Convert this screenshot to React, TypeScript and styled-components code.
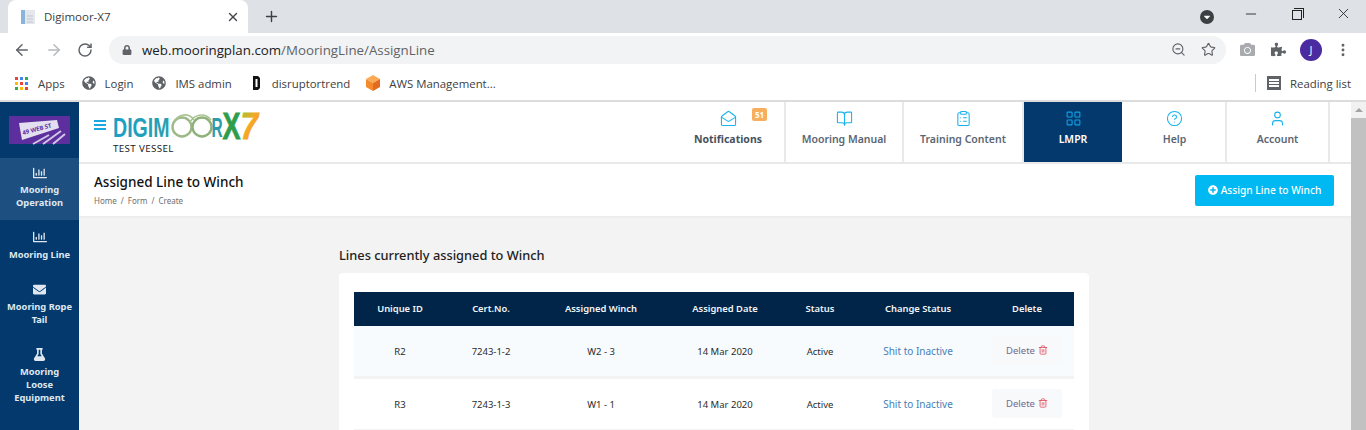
import { ReactNode } from 'react';
import styled, { createGlobalStyle } from 'styled-components';
import { ArrowLeft, ArrowRight, BookOpen, CircleHelp, ClipboardList, LayoutGrid, MailOpen, Minus, MoreVertical, Plus, RotateCw, Star, Trash2, User, X, ZoomOut } from 'lucide-react';
import { FaCamera, FaCaretDown, FaEnvelope, FaFlask, FaGlobeAmericas, FaLock, FaPlusCircle, FaPuzzlePiece, FaRegChartBar } from 'react-icons/fa';

const GlobalStyle = createGlobalStyle`
  html, body {
    margin: 0;
    height: 430px;
    overflow: hidden;
    background: #f3f3f3;
    font-family: "Noto Sans", "Open Sans", sans-serif;
  }
  * { box-sizing: border-box; }
`;

const Page = styled.div`
  width: 1366px;
  height: 430px;
  display: flex;
  flex-direction: column;
  overflow: hidden;
`;

const TabStrip = styled.div`
  height: 33px;
  flex: none;
  display: flex;
  align-items: flex-end;
  padding-left: 8px;
  background: #dee1e6;
`;

const Tab = styled.div`
  width: 240px;
  height: 33px;
  padding: 0 8px 0 12px;
  display: flex;
  align-items: center;
  background: #fff;
  border-radius: 8px 8px 0 0;
  font: 11.5px "Open Sans", sans-serif;
  color: #3c4043;
`;

const TabTitle = styled.span`
  flex: 1;
  margin-left: 8px;
`;

const NewTab = styled.div`
  width: 46px;
  display: flex;
  justify-content: center;
  align-self: center;
  color: #3c4043;
`;

const WindowControls = styled.div`
  margin-left: auto;
  align-self: stretch;
  display: flex;
  align-items: center;
  color: #222;
`;

const ProfileDrop = styled.span`
  width: 14px;
  height: 14px;
  margin-right: 14px;
  margin-top: 1px;
  display: flex;
  align-items: center;
  justify-content: center;
  border-radius: 50%;
  background: #3c4043;
  color: #fff;
`;

const WindowButton = styled.span`
  width: 46px;
  display: flex;
  justify-content: center;
  margin-top: -6px;
`;

const RestoreIcon = styled.span`
  position: relative;
  width: 10px;
  height: 10px;
  margin-top: 3px;
  border: 1px solid #222;
  &::after {
    content: '';
    position: absolute;
    left: 1px;
    top: -3px;
    width: 9px;
    height: 9px;
    border-top: 1px solid #222;
    border-right: 1px solid #222;
  }
`;

const Toolbar = styled.div`
  height: 33px;
  flex: none;
  display: flex;
  align-items: center;
  padding-left: 13px;
  background: #fff;
`;

const NavButton = styled.span<{ $faded?: boolean }>`
  width: 32px;
  display: flex;
  color: ${(p) => (p.$faded ? '#b6b9bd' : '#5f6368')};
`;

const Omnibox = styled.div`
  width: 1117px;
  height: 28px;
  padding: 0 10px 0 13px;
  display: flex;
  align-items: center;
  background: #f1f3f4;
  border-radius: 14px;
  font: 13.3px "Open Sans", sans-serif;
  color: #5f6368;
`;

const LockIcon = styled.span`
  display: flex;
  margin-right: 10px;
  color: #5f6368;
`;

const Host = styled.span`
  color: #202124;
`;

const OmniActions = styled.span`
  margin-left: auto;
  display: flex;
  align-items: center;
  gap: 15px;
  color: #5f6368;
`;

const Extensions = styled.div`
  display: flex;
  align-items: center;
  margin-left: 14px;
  gap: 16px;
  color: #5f6368;
`;

const Avatar = styled.span`
  width: 22px;
  height: 22px;
  margin-left: -2px;
  margin-right: -3px;
  display: flex;
  align-items: center;
  justify-content: center;
  border-radius: 50%;
  background: #4b2ca0;
  color: #fff;
  font: 11px "Open Sans", sans-serif;
`;

const BookmarksBar = styled.div`
  height: 34px;
  flex: none;
  display: flex;
  align-items: center;
  padding-left: 15px;
  background: #fff;
  font: 11.4px "Open Sans", sans-serif;
  color: #3c4043;
`;

const Bookmark = styled.span<{ $gap: number; $iconGap?: number }>`
  display: flex;
  align-items: center;
  gap: ${(p) => p.$iconGap ?? 9}px;
  margin-right: ${(p) => p.$gap}px;
`;

const AppsGrid = styled.span`
  width: 13px;
  display: grid;
  grid-template-columns: repeat(3, 3px);
  gap: 2px;
  margin-right: 2px;
`;

const AppsDot = styled.i<{ $color: string }>`
  height: 3px;
  background: ${(p) => p.$color};
`;

const ReadingList = styled.span`
  margin-left: auto;
  margin-right: 15px;
  height: 18px;
  padding-left: 11px;
  display: flex;
  align-items: center;
  gap: 9px;
  border-left: 1px solid #c8cacd;
`;

const ReadingIcon = styled.span`
  width: 14px;
  height: 14px;
  border: 2px solid #5f6368;
  background: repeating-linear-gradient(#5f6368 0 1px, #fff 1px 3px);
`;

const AppFrame = styled.div`
  flex: 1;
  min-height: 0;
  display: flex;
  border-top: 2px solid #dcdcdc;
`;

const Sidebar = styled.nav`
  width: 79px;
  flex: none;
  background: #03396c;
`;

const SideLogo = styled.div`
  height: 56px;
  display: flex;
  align-items: center;
  justify-content: center;
`;

const SideItem = styled.div<{ $active?: boolean; $height: number }>`
  height: ${(p) => p.$height}px;
  padding: ${(p) => (p.$active ? '8px' : '10px')} 7px 0;
  display: flex;
  flex-direction: column;
  align-items: center;
  gap: ${(p) => (p.$active ? 3 : 4)}px;
  background: ${(p) => (p.$active ? '#1d5080' : 'transparent')};
  color: #dfe8f1;
  font-size: 9.3px;
  font-weight: 700;
  line-height: 13px;
  text-align: center;
`;

const Main = styled.div`
  flex: 1;
  min-width: 0;
  display: flex;
  flex-direction: column;
`;

const TopBar = styled.header`
  height: 62px;
  flex: none;
  display: flex;
  background: #fff;
  border-bottom: 2px solid #e9e9e9;
`;

const Brand = styled.div`
  width: 602px;
  padding: 9px 0 0 15px;
  display: flex;
  gap: 6px;
`;

const Burger = styled.span`
  position: relative;
  width: 12px;
  height: 10px;
  margin-top: 9px;
  border-top: 2px solid #19a8e0;
  border-bottom: 2px solid #19a8e0;
  &::after {
    content: '';
    position: absolute;
    left: 0;
    right: 0;
    top: 2px;
    height: 2px;
    background: #19a8e0;
  }
`;

const LogoColumn = styled.div`
  display: flex;
  flex-direction: column;
`;

const LogoSvg = styled.svg`
  overflow: visible;
`;

const VesselName = styled.span`
  margin: 2px 0 0 1px;
  font-size: 9.8px;
  line-height: 12px;
  letter-spacing: 0.35px;
  color: #222;
`;

const NavItem = styled.div<{ $width: number; $active?: boolean; $strong?: boolean }>`
  position: relative;
  width: ${(p) => p.$width}px;
  flex: none;
  padding: 8px ${(p) => (p.$strong ? 9 : 0)}px 0 0;
  display: flex;
  flex-direction: column;
  align-items: center;
  gap: 5px;
  border-right: 2px solid ${(p) => (p.$active ? '#fff' : '#e9e9e9')};
  background: ${(p) => (p.$active ? '#03396c' : '#fff')};
  color: ${(p) => (p.$active ? '#fff' : p.$strong ? '#48525e' : '#5b6673')};
  font-size: 10.5px;
  font-weight: ${(p) => (p.$strong ? 700 : 600)};
  line-height: 15px;
`;

const NavIcon = styled.span<{ $active?: boolean }>`
  display: flex;
  color: ${(p) => (p.$active ? '#0fa3e8' : '#18b3ee')};
`;

const Badge = styled.span`
  position: absolute;
  top: 6px;
  right: 17px;
  width: 15px;
  height: 13px;
  display: flex;
  align-items: center;
  justify-content: center;
  border-radius: 2px;
  background: #f7ae5e;
  color: #fff;
  font-size: 8px;
  font-weight: 700;
`;

const FillBar = styled.div`
  flex: 1;
`;

const SubHeader = styled.div`
  height: 54px;
  flex: none;
  display: flex;
  align-items: center;
  justify-content: space-between;
  padding: 0 17px 0 15px;
  background: #fff;
  border-bottom: 2px solid #ededed;
`;

const TitleBlock = styled.div`
  padding-bottom: 2px;
`;

const PageTitle = styled.h1`
  margin: 0 0 4px;
  font-size: 13.5px;
  font-weight: 500;
  line-height: 18px;
  color: #111;
`;

const Crumbs = styled.div`
  display: flex;
  gap: 4px;
  font-size: 8px;
  line-height: 11px;
  color: #6e6e6e;
`;

const PrimaryButton = styled.button`
  width: 139px;
  height: 31px;
  display: flex;
  align-items: center;
  justify-content: center;
  gap: 3px;
  border: 0;
  border-radius: 2px;
  background: #00b9f2;
  color: #fff;
  font: 500 10.2px "Noto Sans", sans-serif;
`;

const Content = styled.section`
  flex: 1;
  padding: 27px 0 0 260px;
  background: #f3f3f3;
  overflow: hidden;
`;

const SectionTitle = styled.h2`
  margin: 0 0 8px;
  font-size: 12.8px;
  font-weight: 500;
  line-height: 20px;
  color: #222;
`;

const Card = styled.div`
  width: 750px;
  padding: 19px 15px 0;
  background: #fff;
  border-radius: 4px 4px 0 0;
`;

const Row = styled.div<{ $head?: boolean; $tint?: boolean }>`
  display: grid;
  grid-template-columns: 92px 90px 130px 118px 72px 124px 94px;
  align-items: center;
  justify-items: center;
  height: ${(p) => (p.$head ? 34 : 53)}px;
  padding-bottom: ${(p) => (p.$head ? 1 : 0)}px;
  border-bottom: ${(p) => (p.$head ? 'none' : '3px solid #f3f3f3')};
  background: ${(p) => (p.$head ? '#012548' : p.$tint ? '#f7fbfe' : '#fff')};
  color: ${(p) => (p.$head ? '#f3f6f9' : '#2b2b2b')};
  font-size: ${(p) => (p.$head ? 9.4 : 9.5)}px;
  font-weight: ${(p) => (p.$head ? 600 : 400)};
`;

const StatusLink = styled.span`
  font-size: 10px;
  color: #4681b8;
`;

const DeleteButton = styled.span`
  width: 70px;
  height: 29px;
  display: flex;
  align-items: center;
  justify-content: center;
  gap: 3px;
  margin-top: -2px;
  border-radius: 3px;
  background: #f8f9fb;
  color: #71688f;
`;

const TrashIcon = styled.span`
  display: flex;
  color: #e0525f;
`;

const Scrollbar = styled.div`
  width: 15px;
  flex: none;
  padding-top: 6px;
  display: flex;
  flex-direction: column;
  align-items: center;
  gap: 6px;
  background: #f1f1f1;
`;

const ScrollArrow = styled.span`
  width: 0;
  height: 0;
  border-left: 4px solid transparent;
  border-right: 4px solid transparent;
  border-bottom: 4px solid #a3a3a3;
`;

const ScrollThumb = styled.span`
  flex: 1;
  width: 100%;
  background: #c1c1c1;
`;

const FavIcon = () => (
  <svg width="16" height="16" viewBox="0 0 16 16">
    <rect x="1" y="1" width="5" height="14" fill="#8ab4dc" />
    <rect x="5" y="1" width="10" height="14" fill="#e4e7ec" />
    <path d="M7 7h6M7 10h6M7 13h6" stroke="#c2c7ce" />
  </svg>
);

const AwsCube = () => (
  <svg width="16" height="18" viewBox="0 0 16 18">
    <path d="M8 1l7 4-7 4-7-4z" fill="#fbab55" />
    <path d="M1 5l7 4v8l-7-4z" fill="#f58a2c" />
    <path d="M15 5l-7 4v8l7-4z" fill="#e36a1f" />
  </svg>
);

const StreetLogo = () => (
  <LogoSvg width="61" height="28" viewBox="0 0 61 28">
    <rect width="61" height="28" fill="#5d2f9e" />
    <path d="M10 7L48 4l2 8-37 12z" fill="#e4dff0" />
    <path d="M24 28l16-9M34 28l18-13M44 28l12-10" stroke="#cfc7e6" strokeWidth="2" />
    <text x="14" y="19" fontSize="6" fontWeight="700" fill="#5d2f9e" transform="rotate(-15 14 19)">
      49 WEB ST
    </text>
  </LogoSvg>
);

const DigimoorLogo = () => (
  <LogoSvg width="150" height="30" viewBox="0 0 150 30" fontFamily="'Liberation Sans', sans-serif" fontWeight="700">
    <defs>
      <linearGradient id="logoBlue" x1="0" x2="1" y1="0" y2="0">
        <stop offset="0" stopColor="#1b9fc8" />
        <stop offset="1" stopColor="#2a9fae" />
      </linearGradient>
      <linearGradient id="logoSeven" x1="0" x2="1" y1="0" y2="1">
        <stop offset="0" stopColor="#8cc63f" />
        <stop offset="0.5" stopColor="#f7a823" />
        <stop offset="1" stopColor="#f07f2a" />
      </linearGradient>
    </defs>
    <text transform="translate(1 26) scale(0.7 1)" fontSize="28" fill="url(#logoBlue)">
      DIGIM
    </text>
    <ellipse cx="70" cy="16" rx="9.5" ry="9.5" fill="none" stroke="#9db98a" strokeWidth="2.4" />
    <ellipse cx="90" cy="16" rx="9.5" ry="9.5" fill="none" stroke="#8fb27a" strokeWidth="2.4" />
    <path d="M62 10C70 1 78 3 82 9M78 11C84 2 94 2 99 9" fill="none" stroke="#a9c394" strokeWidth="1.6" />
    <text transform="translate(99.5 26) scale(0.55 1)" fontSize="28" fill="#2f9aa8">
      R
    </text>
    <text transform="translate(110.5 28) scale(0.75 1)" fontSize="36" fill="#2f9e4b" stroke="#2f9e4b" strokeWidth="0.8">
      X
    </text>
    <text transform="translate(128.5 28) scale(0.85 1)" fontSize="37" fontStyle="italic" fill="url(#logoSeven)" stroke="url(#logoSeven)" strokeWidth="0.8">
      7
    </text>
  </LogoSvg>
);

const appColors = ['#ea4335', '#4285f4', '#34a853', '#fbbc05', '#ea4335', '#4285f4', '#34a853', '#fbbc05', '#ea4335'];

const navItems: { label: string; width: number; icon: ReactNode; active?: boolean; badge?: string }[] = [
  { label: 'Notifications', width: 105, icon: <MailOpen size={17} strokeWidth={1.5} />, badge: '51' },
  { label: 'Mooring Manual', width: 118, icon: <BookOpen size={17} strokeWidth={1.5} /> },
  { label: 'Training Content', width: 120, icon: <ClipboardList size={17} strokeWidth={1.5} /> },
  { label: 'LMPR', width: 100, icon: <LayoutGrid size={17} strokeWidth={1.5} />, active: true },
  { label: 'Help', width: 103, icon: <CircleHelp size={17} strokeWidth={1.5} /> },
  { label: 'Account', width: 103, icon: <User size={17} strokeWidth={1.5} /> },
];

const sideItems: { label: string; height: number; icon: ReactNode; active?: boolean }[] = [
  { label: 'Mooring Operation', height: 62, icon: <FaRegChartBar size={14} />, active: true },
  { label: 'Mooring Line', height: 53, icon: <FaRegChartBar size={14} /> },
  { label: 'Mooring Rope Tail', height: 65, icon: <FaEnvelope size={13} /> },
  { label: 'Mooring Loose Equipment', height: 70, icon: <FaFlask size={13} /> },
];

const lines = [
  { id: 'R2', cert: '7243-1-2', winch: 'W2 - 3', tint: true },
  { id: 'R3', cert: '7243-1-3', winch: 'W1 - 1', tint: false },
];

const headers = ['Unique ID', 'Cert.No.', 'Assigned Winch', 'Assigned Date', 'Status', 'Change Status', 'Delete'];

const App = () => (
  <Page>
    <GlobalStyle />
    <TabStrip>
      <Tab>
        <FavIcon />
        <TabTitle>Digimoor-X7</TabTitle>
        <X size={14} strokeWidth={2.4} color="#45484c" />
      </Tab>
      <NewTab>
        <Plus size={17} strokeWidth={2} />
      </NewTab>
      <WindowControls>
        <ProfileDrop>
          <FaCaretDown size={10} />
        </ProfileDrop>
        <WindowButton>
          <Minus size={16} strokeWidth={1.3} />
        </WindowButton>
        <WindowButton>
          <RestoreIcon />
        </WindowButton>
        <WindowButton>
          <X size={17} strokeWidth={1.2} />
        </WindowButton>
      </WindowControls>
    </TabStrip>

    <Toolbar>
      <NavButton>
        <ArrowLeft size={18} strokeWidth={2} />
      </NavButton>
      <NavButton $faded>
        <ArrowRight size={18} strokeWidth={2} />
      </NavButton>
      <NavButton>
        <RotateCw size={16} strokeWidth={2.2} />
      </NavButton>
      <Omnibox>
        <LockIcon>
          <FaLock size={10} />
        </LockIcon>
        <span>
          <Host>web.mooringplan.com</Host>/MooringLine/AssignLine
        </span>
        <OmniActions>
          <ZoomOut size={15} strokeWidth={1.8} />
          <Star size={15} strokeWidth={1.8} />
        </OmniActions>
      </Omnibox>
      <Extensions>
        <FaCamera size={15} color="#a9abae" />
        <FaPuzzlePiece size={15} />
        <Avatar>J</Avatar>
        <MoreVertical size={16} strokeWidth={2.4} />
      </Extensions>
    </Toolbar>

    <BookmarksBar>
      <Bookmark $gap={17} $iconGap={8}>
        <AppsGrid>
          {appColors.map((color, index) => (
            <AppsDot key={index} $color={color} />
          ))}
        </AppsGrid>
        Apps
      </Bookmark>
      <Bookmark $gap={19}>
        <FaGlobeAmericas size={14} color="#5f6368" />
        Login
      </Bookmark>
      <Bookmark $gap={20}>
        <FaGlobeAmericas size={14} color="#5f6368" />
        IMS admin
      </Bookmark>
      <Bookmark $gap={15} $iconGap={11}>
        <svg width="9" height="14" viewBox="0 0 9 14">
          <path d="M1 0h5l2 2v10l-2 2H1z" fill="#111" />
          <rect x="3.5" y="3" width="2" height="8" fill="#fff" />
        </svg>
        disruptortrend
      </Bookmark>
      <Bookmark $gap={0} $iconGap={8}>
        <AwsCube />
        AWS Management...
      </Bookmark>
      <ReadingList>
        <ReadingIcon />
        Reading list
      </ReadingList>
    </BookmarksBar>

    <AppFrame>
      <Sidebar>
        <SideLogo>
          <StreetLogo />
        </SideLogo>
        {sideItems.map((item) => (
          <SideItem key={item.label} $active={item.active} $height={item.height}>
            {item.icon}
            {item.label}
          </SideItem>
        ))}
      </Sidebar>

      <Main>
        <TopBar>
          <Brand>
            <Burger />
            <LogoColumn>
              <DigimoorLogo />
              <VesselName>TEST VESSEL</VesselName>
            </LogoColumn>
          </Brand>
          {navItems.map((item) => (
            <NavItem key={item.label} $width={item.width} $active={item.active} $strong={!!item.badge}>
              <NavIcon $active={item.active}>{item.icon}</NavIcon>
              {item.label}
              {item.badge && <Badge>{item.badge}</Badge>}
            </NavItem>
          ))}
          <FillBar />
        </TopBar>

        <SubHeader>
          <TitleBlock>
            <PageTitle>Assigned Line to Winch</PageTitle>
            <Crumbs>
              <span>Home</span>
              <span>/</span>
              <span>Form</span>
              <span>/</span>
              <span>Create</span>
            </Crumbs>
          </TitleBlock>
          <PrimaryButton>
            <FaPlusCircle size={10} />
            Assign Line to Winch
          </PrimaryButton>
        </SubHeader>

        <Content>
          <SectionTitle>Lines currently assigned to Winch</SectionTitle>
          <Card>
            <Row $head>
              {headers.map((header) => (
                <span key={header}>{header}</span>
              ))}
            </Row>
            {lines.map((line) => (
              <Row key={line.id} $tint={line.tint}>
                <span>{line.id}</span>
                <span>{line.cert}</span>
                <span>{line.winch}</span>
                <span>14 Mar 2020</span>
                <span>Active</span>
                <StatusLink>Shit to Inactive</StatusLink>
                <DeleteButton>
                  Delete
                  <TrashIcon>
                    <Trash2 size={10} />
                  </TrashIcon>
                </DeleteButton>
              </Row>
            ))}
          </Card>
        </Content>
      </Main>

      <Scrollbar>
        <ScrollArrow />
        <ScrollThumb />
      </Scrollbar>
    </AppFrame>
  </Page>
);

export default App;
